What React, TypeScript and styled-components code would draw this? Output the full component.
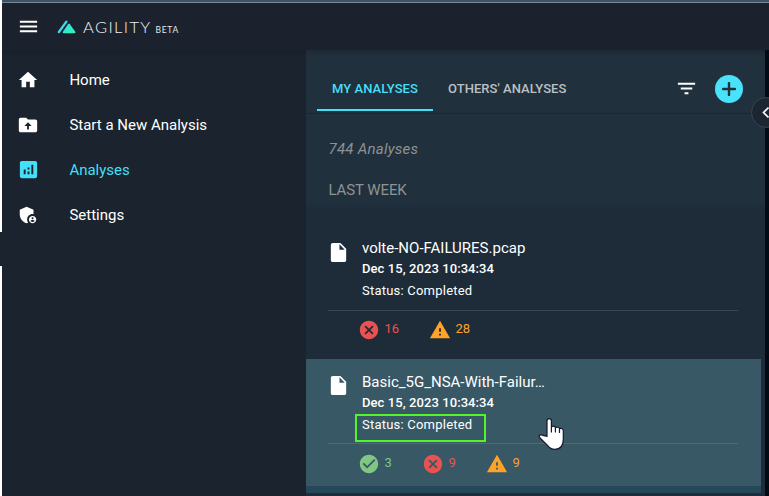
import React from "react";
import styled, { createGlobalStyle } from "styled-components";
import {
  MdMenu,
  MdHome,
  MdAnalytics,
  MdAdminPanelSettings,
  MdFilterList,
  MdInsertDriveFile,
  MdCancel,
  MdWarning,
  MdCheckCircle,
} from "react-icons/md";

const Global = createGlobalStyle`
  *, *::before, *::after { box-sizing: border-box; }
  body { margin: 0; font-family: Roboto, "Liberation Sans", sans-serif; background: #1b232e; overflow: hidden; }
`;

const Page = styled.div`
  display: flex;
  width: 769px;
  height: 496px;
  overflow: hidden;
  background: #1b232e;
`;

const Edge = styled.div`
  width: 2px;
  flex: none;
  display: flex;
  flex-direction: column;
  justify-content: space-between;
`;

const EdgePart = styled.div<{ $h: number }>`
  height: ${(p) => p.$h}px;
  background: #fff;
`;

const Shell = styled.div`
  flex: 1;
  min-width: 0;
  display: flex;
  flex-direction: column;
`;

const TopStrip = styled.div`
  height: 3px;
  flex: none;
  background: #3b5564;
  border-bottom: 1px solid #788791;
`;

const Header = styled.header`
  height: 47px;
  flex: none;
  display: flex;
  align-items: center;
  padding-left: 15px;
  background: #1b222d;
  color: #fff;
  svg { display: block; }
`;

const Logo = styled.div`
  display: flex;
  align-items: flex-end;
  margin-left: 17px;
  height: 14px;
`;

const Brand = styled.span`
  font: 300 16.5px/14px Lato, sans-serif;
  letter-spacing: 1.35px;
  margin-left: 7px;
  color: #f0f2f4;
`;

const Beta = styled.span`
  font: 400 8.5px/8px Lato, sans-serif;
  letter-spacing: 0.7px;
  margin-left: 4px;
  color: #e4e8ea;
`;

const Body = styled.div`
  flex: 1;
  display: flex;
  min-height: 0;
`;

const Sidebar = styled.nav`
  width: 304px;
  flex: none;
  padding-top: 7px;
  background: linear-gradient(#181f29, #1b232e 6px);
`;

const NavItem = styled.div<{ $active?: boolean }>`
  display: flex;
  align-items: center;
  height: 45px;
  padding-left: 14px;
  font-size: 15px;
  line-height: 20px;
  color: ${(p) => (p.$active ? "#45dff7" : "#fff")};
`;

const NavIcon = styled.span`
  display: flex;
  align-items: center;
  justify-content: center;
  width: 24px;
  margin-right: 29.4px;
  flex: none;
`;

const Panel = styled.main`
  position: relative;
  width: 459px;
  flex: none;
  display: flex;
  flex-direction: column;
  background: #1e2c3a;
`;

const Gutter = styled.div`
  flex: 1;
  background: #020a13;
`;

const TabBar = styled.div`
  height: 64px;
  flex: none;
  display: flex;
  align-items: flex-start;
  padding: 17px 22px 0 11px;
  background: linear-gradient(#1d2a36, #20303d 7px);
  border-bottom: 1px solid #1a2733;
`;

const Tab = styled.div<{ $active?: boolean }>`
  height: 44px;
  padding: 0 15px;
  font-weight: 500;
  font-size: 13px;
  line-height: 43px;
  letter-spacing: 0.06px;
  color: ${(p) => (p.$active ? "#45dff7" : "#bcc0c4")};
  border-bottom: 2px solid ${(p) => (p.$active ? "#45dff7" : "transparent")};
  white-space: nowrap;
`;

const Actions = styled.div`
  display: flex;
  align-items: center;
  height: 43px;
  margin-left: auto;
  margin-right: -0.4px;
  gap: 17px;
  color: #fff;
`;

const AddButton = styled.div`
  display: flex;
  align-items: center;
  justify-content: center;
  width: 28px;
  height: 28px;
  border-radius: 50%;
  background: #49e2fa;
`;

const Summary = styled.div`
  height: 97px;
  flex: none;
  padding: 25px 0 0 22.5px;
  color: #8f9293;
  background: linear-gradient(#20303d 86px, #1e2c3a);
`;

const Count = styled.div`
  font-style: italic;
  font-size: 15px;
  line-height: 20px;
  letter-spacing: 0.25px;
`;

const Group = styled.div`
  margin-top: 21px;
  font-size: 15px;
  line-height: 20px;
  letter-spacing: -0.1px;
`;

const Card = styled.article<{ $selected?: boolean }>`
  height: ${(p) => (p.$selected ? 134 : 148)}px;
  flex: none;
  width: ${(p) => (p.$selected ? 455 : 459)}px;
  padding: ${(p) => (p.$selected ? 13 : 27)}px 22px 0;
  background: ${(p) => (p.$selected ? "#385866" : "#1e2c3a")};
  border-bottom: ${(p) => (p.$selected ? "7px solid #244858" : "0")};
  color: #fff;
`;

const CardTop = styled.div<{ $selected?: boolean }>`
  display: flex;
  height: ${(p) => (p.$selected ? 72 : 73)}px;
  width: 410px;
  border-bottom: 1px solid ${(p) => (p.$selected ? "#4d6c76" : "#384855")};
  > svg { margin: ${(p) => (p.$selected ? 2 : 3)}px 12px 0 -1px; flex: none; }
`;

const Name = styled.div`
  font-size: 15px;
  line-height: 20px;
`;

const When = styled.div`
  margin-top: 2px;
  font-weight: 500;
  font-size: 13px;
  line-height: 18px;
  letter-spacing: 0.08px;
`;

const Status = styled.div`
  position: relative;
  margin-top: 4px;
  font-size: 13px;
  line-height: 18px;
  letter-spacing: 0.22px;
`;

const Outline = styled.div`
  position: absolute;
  left: -7px;
  top: -2px;
  width: 131px;
  height: 28px;
  border: 2px solid #52f528;
`;

const Results = styled.div<{ $selected?: boolean }>`
  display: flex;
  align-items: center;
  height: ${(p) => (p.$selected ? 39 : 37)}px;
  padding-left: 30px;
`;

const Result = styled.div<{ $color: string; $w: number }>`
  display: flex;
  align-items: center;
  width: ${(p) => p.$w}px;
  font-size: 13px;
  line-height: 16px;
  color: ${(p) => p.$color};
`;

const ResultIcon = styled.span`
  display: flex;
  align-items: center;
  justify-content: center;
  width: 22px;
  height: 23px;
  margin-right: 4.5px;
  svg { flex: none; }
`;

const Value = styled.span`
  margin-top: -2px;
`;

const Collapse = styled.div`
  position: absolute;
  left: 445px;
  top: 47px;
  width: 31px;
  height: 31px;
  border: 1px solid #39434e;
  border-radius: 50%;
  background: #1b2632;
`;

const Chevron = styled.svg`
  display: block;
  margin: 8px 0 0 9px;
`;

const Pointer = styled.svg`
  position: absolute;
  left: 232px;
  top: 368px;
`;

type Kind = "ok" | "fail" | "warn";
const tones: Record<Kind, string> = { ok: "#81c784", fail: "#e85352", warn: "#ffa328" };
const icons = { ok: MdCheckCircle, fail: MdCancel, warn: MdWarning };

function Entry(props: {
  name: string;
  selected?: boolean;
  results: { kind: Kind; value: number; width: number }[];
}) {
  return (
    <Card $selected={props.selected}>
      <CardTop $selected={props.selected}>
        <MdInsertDriveFile size={23} />
        <div>
          <Name>{props.name}</Name>
          <When>Dec 15, 2023 10:34:34</When>
          <Status>
            Status: Completed
            {props.selected && <Outline />}
          </Status>
        </div>
      </CardTop>
      <Results $selected={props.selected}>
        {props.results.map(({ kind, value, width }) => {
          const Icon = icons[kind];
          return (
            <Result key={kind} $color={tones[kind]} $w={width}>
              <ResultIcon>
                <Icon size={22} />
              </ResultIcon>
              <Value>{value}</Value>
            </Result>
          );
        })}
      </Results>
    </Card>
  );
}

function FolderUpload() {
  return (
    <svg width="22" height="22" viewBox="0 0 24 24" fill="currentColor">
      <path
        fillRule="evenodd"
        d="M20 6h-8l-2-2H4c-1.100 0-2 .9-2 2v12c0 1.100.9 2 2 2h16c1.100 0 2-.9 2-2V8c0-1.100-.9-2-2-2zm-7 7v4h-2v-4H8l4-4.010L16 13h-3z"
      />
    </svg>
  );
}

export default function App() {
  return (
    <Page>
      <Global />
      <Edge>
        <EdgePart $h={232} />
        <EdgePart $h={230} />
      </Edge>
      <Shell>
        <TopStrip />
        <Header>
          <MdMenu size={23} />
          <Logo>
            <svg width="19" height="14" viewBox="0 0 19 14">
              <defs>
                <linearGradient id="peak" x1="0" y1="0" x2="1" y2="1">
                  <stop offset="0" stopColor="#3bdcf0" />
                  <stop offset="1" stopColor="#2ff5b4" />
                </linearGradient>
              </defs>
              <path d="M1.900 12 9.400 1.600" stroke="#3fd8ee" strokeWidth="2.300" strokeLinecap="round" />
              <path d="M7 13.200q-2 0-.9-1.800L11 4.200q1-1.200 1.900 0l5.200 7.200q1 1.800-.9 1.800z" fill="url(#peak)" />
            </svg>
            <Brand>AGILITY</Brand>
            <Beta>BETA</Beta>
          </Logo>
        </Header>
        <Body>
          <Sidebar>
            <NavItem><NavIcon><MdHome size={22} /></NavIcon>Home</NavItem>
            <NavItem><NavIcon><FolderUpload /></NavIcon>Start a New Analysis</NavItem>
            <NavItem $active><NavIcon><MdAnalytics size={23} /></NavIcon>Analyses</NavItem>
            <NavItem><NavIcon><MdAdminPanelSettings size={22} /></NavIcon>Settings</NavItem>
          </Sidebar>
          <Panel>
            <TabBar>
              <Tab $active>MY ANALYSES</Tab>
              <Tab>OTHERS' ANALYSES</Tab>
              <Actions>
                <MdFilterList size={23} />
                <AddButton>
                  <svg width="14" height="14" viewBox="0 0 14 14">
                    <path d="M7 1v12M1 7h12" stroke="#20303d" strokeWidth="2.400" strokeLinecap="round" />
                  </svg>
                </AddButton>
              </Actions>
            </TabBar>
            <Summary>
              <Count>744 Analyses</Count>
              <Group>LAST WEEK</Group>
            </Summary>
            <Entry
              name="volte-NO-FAILURES.pcap"
              results={[
                { kind: "fail", value: 16, width: 71 },
                { kind: "warn", value: 28, width: 60 },
              ]}
            />
            <Entry
              selected
              name="Basic_5G_NSA-With-Failur…"
              results={[
                { kind: "ok", value: 3, width: 64 },
                { kind: "fail", value: 9, width: 64 },
                { kind: "warn", value: 9, width: 60 },
              ]}
            />
            <Collapse>
              <Chevron width="9" height="13" viewBox="0 0 9 13">
                <path d="M7.500 1.500 2.500 6.500l5 5" fill="none" stroke="#fff" strokeWidth="1.700" />
              </Chevron>
            </Collapse>
            <Pointer width="27" height="33" viewBox="0 0 27 33">
              <path
                d="M8.500 18V2.500a2.200 2.200 0 0 1 4.400 0V9q.5-1.200 2-1.200 1.700 0 2 1.500 3.300-1 4.100 1 3.600-.7 3.800 2V21q0 10-8.500 10-4.300 0-7.300-4L1.300 19.500q-1.500-2.400.6-2.900 1.400-.4 3.500.8z"
                transform="translate(.5 .3)"
                fill="#fff"
                stroke="#14182b"
                strokeWidth="1.200"
              />
              <path d="M13.400 9v5.500M17.400 10v4.500M21.500 11v4" stroke="#14182b" strokeWidth="1.200" />
            </Pointer>
          </Panel>
          <Gutter />
        </Body>
      </Shell>
    </Page>
  );
}
